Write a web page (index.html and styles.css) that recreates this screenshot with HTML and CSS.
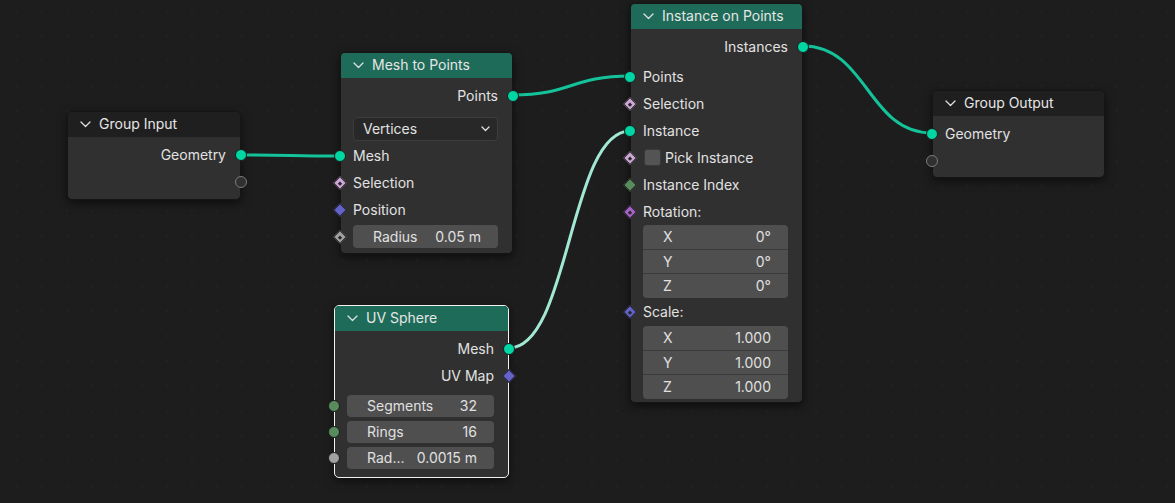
FILE: index.html
```html
<!DOCTYPE html>
<html>
<head>
<meta charset="utf-8">
<link rel="stylesheet" href="styles.css">
</head>
<body>
<div class="canvas">
  <svg class="links" width="1175" height="503" viewBox="0 0 1175 503">
    <path class="link" d="M241 155 C290.5 155 290.5 156 340 156"/>
    <path class="link" d="M513 95 C571.5 95 571.5 76 630 76"/>
    <path class="link sel" d="M509 348 C569.5 348 569.5 131 630 131"/>
    <path class="link" d="M803 46 C867.5 46 867.5 133 932 133"/>
  </svg>

  <!-- Group Input -->
  <div class="node n-gin">
    <div class="hdr hdr-group"><svg class="chev" width="11" height="7" viewBox="0 0 11 7"><polyline points="1,1 5.5,5.5 10,1"/></svg><span>Group Input</span></div>
    <div class="body pad-3">
      <div class="row out"><span>Geometry</span><i class="sock circ geo"></i></div>
      <div class="row out"><i class="sock circ hollow"></i></div>
    </div>
  </div>

  <!-- Mesh to Points -->
  <div class="node n-m2p">
    <div class="hdr hdr-geo"><svg class="chev" width="11" height="7" viewBox="0 0 11 7"><polyline points="1,1 5.5,5.5 10,1"/></svg><span>Mesh to Points</span></div>
    <div class="body">
      <div class="row out"><span>Points</span><i class="sock circ geo"></i></div>
      <div class="drop-wrap">
        <div class="dropdown"><span>Vertices</span><svg class="dchev" width="9" height="6" viewBox="0 0 9 6"><polyline points="1,1 4.5,4.5 8,1"/></svg></div>
      </div>
      <div class="row in"><i class="sock circ geo"></i><span>Mesh</span></div>
      <div class="row in"><i class="sock dia bool dot"></i><span>Selection</span></div>
      <div class="row in"><i class="sock dia vecs"></i><span>Position</span></div>
      <div class="frow f27"><i class="sock dia float dot"></i><div class="field"><span>Radius</span><span>0.05 m</span></div></div>
    </div>
  </div>

  <!-- Instance on Points -->
  <div class="node n-iop">
    <div class="hdr hdr-geo"><svg class="chev" width="11" height="7" viewBox="0 0 11 7"><polyline points="1,1 5.5,5.5 10,1"/></svg><span>Instance on Points</span></div>
    <div class="body">
      <div class="row out"><span>Instances</span><i class="sock circ geo"></i></div>
      <div class="row in gap-top"><i class="sock circ geo"></i><span>Points</span></div>
      <div class="row in"><i class="sock dia bool dot"></i><span>Selection</span></div>
      <div class="row in"><i class="sock circ geo"></i><span>Instance</span></div>
      <div class="row in"><i class="sock dia bool dot"></i><span class="check"></span><span>Pick Instance</span></div>
      <div class="row in"><i class="sock dia int"></i><span>Instance Index</span></div>
      <div class="row in"><i class="sock dia rot dot"></i><span>Rotation:</span></div>
      <div class="vec-wrap">
        <div class="vfield">
          <div class="vrow"><span>X</span><span>0°</span></div>
          <div class="vrow mid"><span>Y</span><span>0°</span></div>
          <div class="vrow"><span>Z</span><span>0°</span></div>
        </div>
      </div>
      <div class="row in"><i class="sock dia vecs dot"></i><span>Scale:</span></div>
      <div class="vec-wrap mt1">
        <div class="vfield">
          <div class="vrow"><span>X</span><span>1.000</span></div>
          <div class="vrow mid"><span>Y</span><span>1.000</span></div>
          <div class="vrow"><span>Z</span><span>1.000</span></div>
        </div>
      </div>
    </div>
  </div>

  <!-- UV Sphere -->
  <div class="node n-uv selected">
    <div class="hdr hdr-geo"><svg class="chev" width="11" height="7" viewBox="0 0 11 7"><polyline points="1,1 5.5,5.5 10,1"/></svg><span>UV Sphere</span></div>
    <div class="body pb6">
      <div class="row out"><span>Mesh</span><i class="sock circ geo"></i></div>
      <div class="row out"><span>UV Map</span><i class="sock dia vecs"></i></div>
      <div class="frow f26 mt4"><i class="sock circ int"></i><div class="field f22"><span>Segments</span><span>32</span></div></div>
      <div class="frow f26"><i class="sock circ int"></i><div class="field f22"><span>Rings</span><span>16</span></div></div>
      <div class="frow f26"><i class="sock circ float"></i><div class="field f22"><span>Rad...</span><span>0.0015 m</span></div></div>
    </div>
  </div>

  <!-- Group Output -->
  <div class="node n-gout">
    <div class="hdr hdr-group"><svg class="chev" width="11" height="7" viewBox="0 0 11 7"><polyline points="1,1 5.5,5.5 10,1"/></svg><span>Group Output</span></div>
    <div class="body pad-3 pb3">
      <div class="row in"><i class="sock circ geo"></i><span>Geometry</span></div>
      <div class="row in"><i class="sock circ hollow"></i></div>
    </div>
  </div>
</div>
</body>
</html>
```

FILE: styles.css
```css
* { box-sizing: border-box; }
html, body { margin: 0; padding: 0; }
body {
  background: #1d1d1d;
  font-family: Inter, "Noto Sans", "DejaVu Sans", sans-serif;
}
.canvas {
  position: relative;
  width: 1175px;
  height: 503px;
  overflow: hidden;
  background-color: #1d1d1d;
  background-image: radial-gradient(circle, #252525 0 0.8px, transparent 1.3px);
  background-size: 25px 25px;
  background-position: 4.5px -1.5px;
}
.links { position: absolute; left: 0; top: 0; z-index: 0; }
.link { fill: none; stroke: #14c39a; stroke-width: 3; stroke-linecap: round; }
.link.sel { stroke: #a2e8d5; }

.node {
  position: absolute;
  z-index: 1;
  background: #303030;
  border: 1px solid #151515;
  border-radius: 5px;
  box-shadow: 0 3px 10px rgba(0, 0, 0, 0.55);
  color: #e2e2e2;
  font-size: 14px;
  line-height: 1;
}
.node.selected { border-color: #f2f2f2; }

.n-gin { left: 67px; top: 111px; width: 174px; }
.n-m2p { left: 340px; top: 52px; width: 173px; }
.n-iop { left: 630px; top: 3px; width: 173px; }
.n-uv { left: 334px; top: 305px; width: 175px; }
.n-gout { left: 932px; top: 90px; width: 173px; }

.hdr {
  height: 25px;
  display: flex;
  align-items: center;
  padding: 0 0 2px 12px;
  gap: 8px;
  border-radius: 4px 4px 0 0;
  color: #e6e6e6;
}
.hdr-group { background: #1f1f1f; }
.hdr-geo { background: #1d6b58; }
.chev { flex: none; margin-top: 1px; }
.chev polyline, .dchev polyline { fill: none; stroke: #e0e0e0; stroke-width: 1.3; stroke-linecap: round; stroke-linejoin: round; }

.body { padding: 4px 0 3px; }
.body.pad-3 { padding-top: 4px; padding-bottom: 4px; }
.body.pad-3.pb3 { padding-top: 4px; padding-bottom: 3px; }
.body.pb6 { padding-bottom: 6px; }

.row {
  position: relative;
  height: 27px;
  display: flex;
  align-items: center;
  padding: 0 14px 0 12px;
}
.row.out { justify-content: flex-end; }
.row.gap-top { margin-top: 3px; }

.sock {
  position: absolute;
  top: 50%;
  display: block;
}
.sock.circ {
  width: 12px;
  height: 12px;
  border-radius: 50%;
  border: 1px solid #1c1c1c;
  transform: translateY(-50%);
}
.row.out .sock.circ { right: -7px; }
.row.in .sock.circ, .frow .sock.circ { left: -7px; }
.sock.dia {
  width: 10px;
  height: 10px;
  border: 1px solid #1c1c1c;
  transform: translateY(-50%) rotate(45deg);
}
.row.out .sock.dia { right: -6px; }
.row.in .sock.dia, .frow .sock.dia { left: -6px; }
.sock.dot::after {
  content: "";
  position: absolute;
  left: 50%;
  top: 50%;
  width: 3px;
  height: 3px;
  margin: -1.5px 0 0 -1.5px;
  background: #262626;
}

.geo { background: #00d6a3; }
.bool { background: #cca6d6; }
.vecs { background: #6363c7; }
.float { background: #a1a1a1; }
.int { background: #598c5c; }
.rot { background: #a663c7; }
.hollow { background: #303030; border: 1.5px solid #7c7c7c !important; }

.drop-wrap { padding: 8px 14px 1px 12px; }
.dropdown {
  height: 24px;
  background: #282828;
  border: 1px solid #3d3d3d;
  border-radius: 4px;
  display: flex;
  align-items: center;
  justify-content: space-between;
  padding: 0 7px 0 9px;
  color: #e2e2e2;
}

.frow {
  position: relative;
  display: flex;
  align-items: center;
  padding: 0 14px 0 12px;
}
.frow.f27 { height: 27px; }
.frow.f26 { height: 26px; }
.frow.mt4 { margin-top: 4px; }
.field {
  flex: 1;
  height: 23px;
  background: #4f4f4f;
  border-radius: 4px;
  display: flex;
  align-items: center;
  justify-content: space-between;
  padding: 0 17px 0 20px;
  color: #e0e0e0;
}
.field.f22 { height: 22px; }

.check {
  width: 17px;
  height: 17px;
  background: #545454;
  border: 1px solid #3a3a3a;
  border-radius: 3px;
  margin-right: 4px;
  margin-left: 1px;
}

.vec-wrap { padding: 0 14px 0 12px; }
.vec-wrap.mt1 { margin-top: 1px; }
.vfield {
  background: #4f4f4f;
  border-radius: 4px;
  overflow: hidden;
}
.vrow {
  height: 24px;
  display: flex;
  align-items: center;
  justify-content: space-between;
  padding: 0 17px 0 20px;
  color: #e0e0e0;
}
.vrow.mid {
  height: 25px;
  border-top: 1px solid #3a3a3a;
  border-bottom: 1px solid #3a3a3a;
}
```
